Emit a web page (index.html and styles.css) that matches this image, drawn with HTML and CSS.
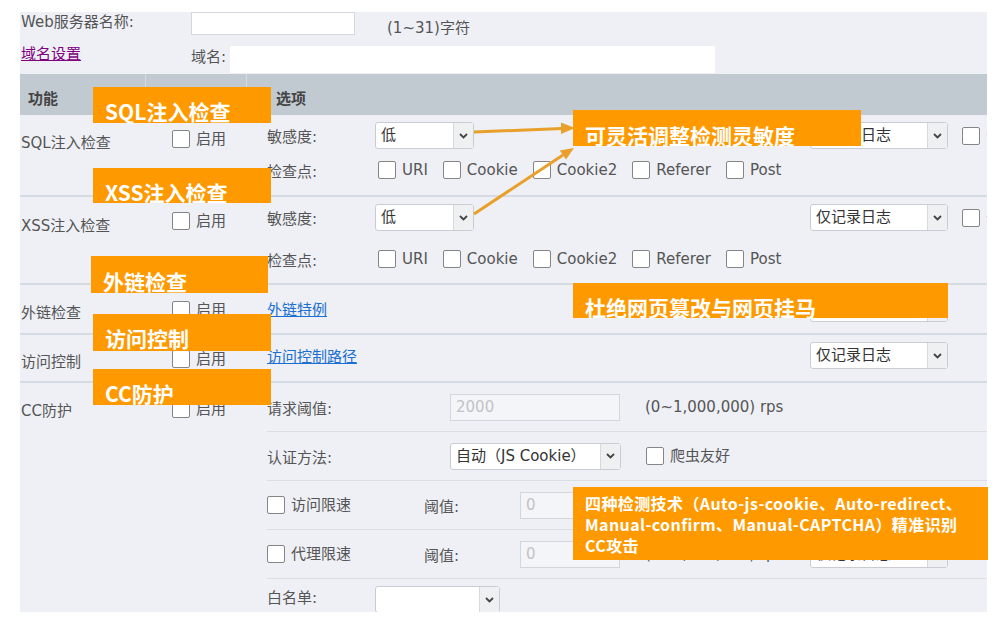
FILE: index.html
```html
<!DOCTYPE html>
<html lang="zh-CN">
<head>
	<meta charset="UTF-8">
	<title>Web防护配置</title>
	<link rel="stylesheet" href="styles.css">
</head>
<body>
<div class="page">
	<div class="panel">
		<!-- 基本信息 -->
		<div class="name-row">
			<span class="basic-label">Web服务器名称:</span>
			<span class="field name-box"></span>
			<span class="hint">(1~31)字符</span>
		</div>
		<div class="domain-row">
			<a href="#" class="domain-link">域名设置</a>
			<span class="domain-label">域名:</span>
			<span class="domain-box"></span>
		</div>

		<!-- 表头 -->
		<div class="head">
			<div class="col-name">功能</div>
			<div class="col-switch"></div>
			<div class="col-opts">选项</div>
		</div>

		<!-- SQL注入 -->
		<div class="row row-sql">
			<div class="col-name">SQL注入检查</div>
			<div class="col-switch"><label class="check"><i class="box"></i>启用</label></div>
			<div class="col-opts">
				<div class="line sense">
					<span class="opt-label">敏感度:</span>
					<span class="select level"><span class="val">低</span><span class="arrow"><svg width="9" height="6" viewBox="0 0 9 6"><path d="M1 1l3.5 3.5L8 1" fill="none" stroke="#444" stroke-width="1.8"/></svg></span></span>
					<span class="select action"><span class="val">仅记录日志</span><span class="arrow"><svg width="9" height="6" viewBox="0 0 9 6"><path d="M1 1l3.5 3.5L8 1" fill="none" stroke="#444" stroke-width="1.8"/></svg></span></span>
					<label class="check"><i class="box"></i>告警</label>
				</div>
				<div class="line points">
					<span class="opt-label">检查点:</span>
					<label class="check first"><i class="box"></i>URI</label>
					<label class="check"><i class="box"></i>Cookie</label>
					<label class="check"><i class="box"></i>Cookie2</label>
					<label class="check"><i class="box"></i>Referer</label>
					<label class="check"><i class="box"></i>Post</label>
				</div>
			</div>
		</div>

		<!-- XSS注入 -->
		<div class="row row-xss">
			<div class="col-name">XSS注入检查</div>
			<div class="col-switch"><label class="check"><i class="box"></i>启用</label></div>
			<div class="col-opts">
				<div class="line sense">
					<span class="opt-label">敏感度:</span>
					<span class="select level"><span class="val">低</span><span class="arrow"><svg width="9" height="6" viewBox="0 0 9 6"><path d="M1 1l3.5 3.5L8 1" fill="none" stroke="#444" stroke-width="1.8"/></svg></span></span>
					<span class="select action"><span class="val">仅记录日志</span><span class="arrow"><svg width="9" height="6" viewBox="0 0 9 6"><path d="M1 1l3.5 3.5L8 1" fill="none" stroke="#444" stroke-width="1.8"/></svg></span></span>
					<label class="check"><i class="box"></i>告警</label>
				</div>
				<div class="line points">
					<span class="opt-label">检查点:</span>
					<label class="check first"><i class="box"></i>URI</label>
					<label class="check"><i class="box"></i>Cookie</label>
					<label class="check"><i class="box"></i>Cookie2</label>
					<label class="check"><i class="box"></i>Referer</label>
					<label class="check"><i class="box"></i>Post</label>
				</div>
			</div>
		</div>

		<!-- 外链检查 -->
		<div class="row row-link">
			<div class="col-name">外链检查</div>
			<div class="col-switch"><label class="check"><i class="box"></i>启用</label></div>
			<div class="col-opts">
				<div class="line">
					<a href="#" class="opt-link">外链特例</a>
					<span class="select action"><span class="val">仅记录日志</span><span class="arrow"><svg width="9" height="6" viewBox="0 0 9 6"><path d="M1 1l3.5 3.5L8 1" fill="none" stroke="#444" stroke-width="1.8"/></svg></span></span>
				</div>
			</div>
		</div>

		<!-- 访问控制 -->
		<div class="row row-acl">
			<div class="col-name">访问控制</div>
			<div class="col-switch"><label class="check"><i class="box"></i>启用</label></div>
			<div class="col-opts">
				<div class="line">
					<a href="#" class="opt-link">访问控制路径</a>
					<span class="select action"><span class="val">仅记录日志</span><span class="arrow"><svg width="9" height="6" viewBox="0 0 9 6"><path d="M1 1l3.5 3.5L8 1" fill="none" stroke="#444" stroke-width="1.8"/></svg></span></span>
				</div>
			</div>
		</div>

		<!-- CC防护 -->
		<div class="row row-cc">
			<div class="col-name">CC防护</div>
			<div class="col-switch"><label class="check"><i class="box"></i>启用</label></div>
			<div class="col-opts">
				<div class="sub">
					<span class="cc-label">请求阈值:</span>
					<span class="field off rps-box">2000</span>
					<span class="range">(0~1,000,000) rps</span>
				</div>
				<div class="sub">
					<span class="cc-label">认证方法:</span>
					<span class="select auth"><span class="val">自动（JS Cookie）</span><span class="arrow"><svg width="9" height="6" viewBox="0 0 9 6"><path d="M1 1l3.5 3.5L8 1" fill="none" stroke="#444" stroke-width="1.8"/></svg></span></span>
					<label class="check crawler"><i class="box"></i>爬虫友好</label>
				</div>
				<div class="sub">
					<label class="check limit"><i class="box"></i>访问限速</label>
					<span class="limit-label">阈值:</span>
					<span class="field off small-box">0</span>
					<span class="range">(0~1,000,000) rps</span>
					<span class="select action"><span class="val">仅记录日志</span><span class="arrow"><svg width="9" height="6" viewBox="0 0 9 6"><path d="M1 1l3.5 3.5L8 1" fill="none" stroke="#444" stroke-width="1.8"/></svg></span></span>
				</div>
				<div class="sub">
					<label class="check limit"><i class="box"></i>代理限速</label>
					<span class="limit-label">阈值:</span>
					<span class="field off small-box">0</span>
					<span class="range">(0~1,000,000) rps</span>
					<span class="select action"><span class="val">仅记录日志</span><span class="arrow"><svg width="9" height="6" viewBox="0 0 9 6"><path d="M1 1l3.5 3.5L8 1" fill="none" stroke="#444" stroke-width="1.8"/></svg></span></span>
				</div>
				<div class="sub last">
					<span class="opt-label">白名单:</span>
					<span class="select white"><span class="val"></span><span class="arrow"><svg width="9" height="6" viewBox="0 0 9 6"><path d="M1 1l3.5 3.5L8 1" fill="none" stroke="#444" stroke-width="1.8"/></svg></span></span>
				</div>
			</div>
		</div>
	</div>

	<!-- 标注箭头 -->
	<svg class="arrows" width="1000" height="629" viewBox="0 0 1000 629">
		<path d="M474 132L562 128.5" stroke="#e8a02a" stroke-width="3" fill="none"/>
		<polygon points="575,128 561,122.5 561,134" fill="#e8a02a"/>
		<path d="M474 214L563 155" stroke="#e8a02a" stroke-width="3" fill="none"/>
		<polygon points="574,148 566,159.5 559.8,150.5" fill="#e8a02a"/>
	</svg>

	<!-- 标注 -->
	<div class="tag tag-sql">SQL注入检查</div>
	<div class="tag tag-xss">XSS注入检查</div>
	<div class="tag tag-link">外链检查</div>
	<div class="tag tag-acl">访问控制</div>
	<div class="tag tag-cc">CC防护</div>
	<div class="tag tag-sense">可灵活调整检测灵敏度</div>
	<div class="tag tag-tamper">杜绝网页篡改与网页挂马</div>
	<div class="tag tag-tech">四种检测技术（Auto-js-cookie、Auto-redirect、<br>Manual-confirm、Manual-CAPTCHA）精准识别<br>CC攻击</div>
</div>
</body>
</html>
```

FILE: styles.css
```css
*{
	margin:0;padding:0;
	box-sizing:border-box;
}
body{
	background:#ffffff;
	font-family:"DejaVu Sans","Noto Sans CJK SC",sans-serif;
	font-size:15px;
	color:#555555;
}
a{
	color:#1a6fd0;
}
.page{
	position:relative;
	width:1000px;
	height:629px;
	overflow:hidden;
}
.panel{
	width:967px;
	height:600px;
	margin:12px 0 0 20px;
	background:#eef0f5;
	overflow:hidden;
}
/* 基本信息 */
.name-row{
	display:flex;
	align-items:flex-start;
	height:34px;
}
.basic-label{
	width:171px;
	padding:1px 0 0 1px;
	line-height:18px;
}
.field{
	display:block;
	height:27px;
	background:#ffffff;
	border:1px solid #d3d7dd;
	padding-left:5px;
	line-height:25px;
	color:#c3c3c3;
}
.field.off{
	background:#f4f5f8;
}
.name-box{
	width:164px;
	height:23px;
}
.hint{
	margin-left:32px;
	padding-top:7px;
	line-height:18px;
}
.domain-row{
	display:flex;
	align-items:flex-start;
	height:28px;
}
.domain-link{
	width:171px;
	padding-left:1px;
	line-height:16px;
	color:#800080;
}
.domain-label{
	width:39px;
	padding-top:2px;
	line-height:18px;
}
.domain-box{
	width:485px;
	height:27px;
	background:#ffffff;
}
/* 表格 */
.col-name{
	width:126px;
	flex-shrink:0;
}
.col-switch{
	width:101px;
	flex-shrink:0;
}
.col-opts{
	flex:1;
}
.head{
	display:flex;
	height:41px;
	background:#c1c9d1;
	font-weight:bold;
	color:#444444;
	line-height:20px;
}
.head .col-name{
	padding:15px 0 0 8px;
	border-right:1px solid #d6dce2;
}
.head .col-switch{
	border-right:1px solid #d6dce2;
}
.head .col-opts{
	padding:15px 0 0 29px;
}
.row{
	display:flex;
	border-bottom:2px solid #d5dbe2;
}
.row .col-name{
	padding:18px 0 0 1px;
	line-height:20px;
	white-space:nowrap;
}
.row .col-switch{
	padding:15px 0 0 26px;
}
.row .col-opts{
	padding:7px 0 0 20px;
}
.row-sql{
	height:82px;
}
.row-xss{
	height:88px;
}
.row-xss .col-name{
	padding-top:19px;
}
.row-link{
	height:50px;
}
.row-link .col-switch{
	padding-top:16px;
}
.row-link .col-opts{
	padding-top:10px;
}
.row-acl{
	height:48px;
}
.row-acl .col-name{
	padding-top:17px;
}
.row-cc{
	height:229px;
	border-bottom:0;
}
.row-cc .col-switch{
	padding-top:17px;
}
.row-cc .col-opts{
	padding-top:0;
}
/* 复选框 */
.check{
	display:inline-flex;
	align-items:center;
	line-height:18px;
	white-space:nowrap;
}
.box{
	display:inline-block;
	width:18px;
	height:18px;
	background:#ffffff;
	border:1px solid #858585;
	border-radius:2px;
	margin-right:6px;
}
/* 选项行 */
.line{
	display:flex;
	align-items:center;
	height:27px;
}
.line > *,.sub > *{
	flex-shrink:0;
}
.points{
	height:18px;
	margin-top:12px;
}
.row-xss .points{
	margin-top:19px;
}
.opt-label{
	width:108px;
}
.points .check{
	margin-right:15px;
}
.points .first{
	margin-left:3px;
}
.opt-link{
	text-decoration:underline;
}
/* 下拉框 */
.select{
	display:flex;
	height:27px;
	background:#ffffff;
	border:1px solid #c9cdd3;
	border-radius:3px;
	color:#333333;
}
.select .val{
	flex:1;
	padding-left:5px;
	line-height:25px;
	white-space:nowrap;
	overflow:hidden;
}
.select .arrow{
	width:20px;
	background:#eff0f2;
	border-left:1px solid #d6d9dd;
	display:flex;
	align-items:center;
	justify-content:center;
}
.level{
	width:99px;
}
.action{
	width:138px;
	margin-left:auto;
	margin-right:39px;
}
.sense .action{
	margin-left:336px;
	margin-right:14px;
}
/* CC防护 */
.sub{
	display:flex;
	align-items:center;
	height:49px;
	border-bottom:1px solid #dadfe5;
}
.sub.last{
	align-items:flex-start;
	padding-top:7px;
	border-bottom:0;
}
.cc-label{
	width:183px;
}
.rps-box{
	width:170px;
}
.range{
	margin-left:25px;
}
.auth{
	width:171px;
}
.crawler{
	margin-left:25px;
}
.limit{
	width:157px;
}
.limit-label{
	width:96px;
}
.small-box{
	width:100px;
}
.white{
	width:125px;
}
/* 标注 */
.arrows{
	position:absolute;
	left:0;
	top:0;
}
.tag{
	position:absolute;
	background:#ff9900;
	color:#ffffff;
	font-family:"Noto Sans CJK SC",sans-serif;
	font-weight:bold;
	font-size:21px;
	line-height:22px;
	padding:13px 0 0 12px;
	white-space:nowrap;
}
.tag-sql{
	left:93px;top:87px;
	width:178px;height:36px;
}
.tag-xss{
	left:93px;top:168px;
	width:178px;height:35px;
}
.tag-link{
	left:91px;top:256px;
	width:177px;height:37px;
	padding-top:14px;
}
.tag-acl{
	left:93px;top:314px;
	width:178px;height:37px;
}
.tag-cc{
	left:93px;top:369px;
	width:178px;height:36px;
}
.tag-sense{
	left:573px;top:110px;
	width:288px;height:36px;
	padding-top:14px;
}
.tag-tamper{
	left:573px;top:283px;
	width:375px;height:35px;
}
.tag-tech{
	left:573px;top:487px;
	width:415px;height:73px;
	font-size:16px;
	line-height:21px;
	letter-spacing:0.4px;
	padding-top:6px;
}
```
